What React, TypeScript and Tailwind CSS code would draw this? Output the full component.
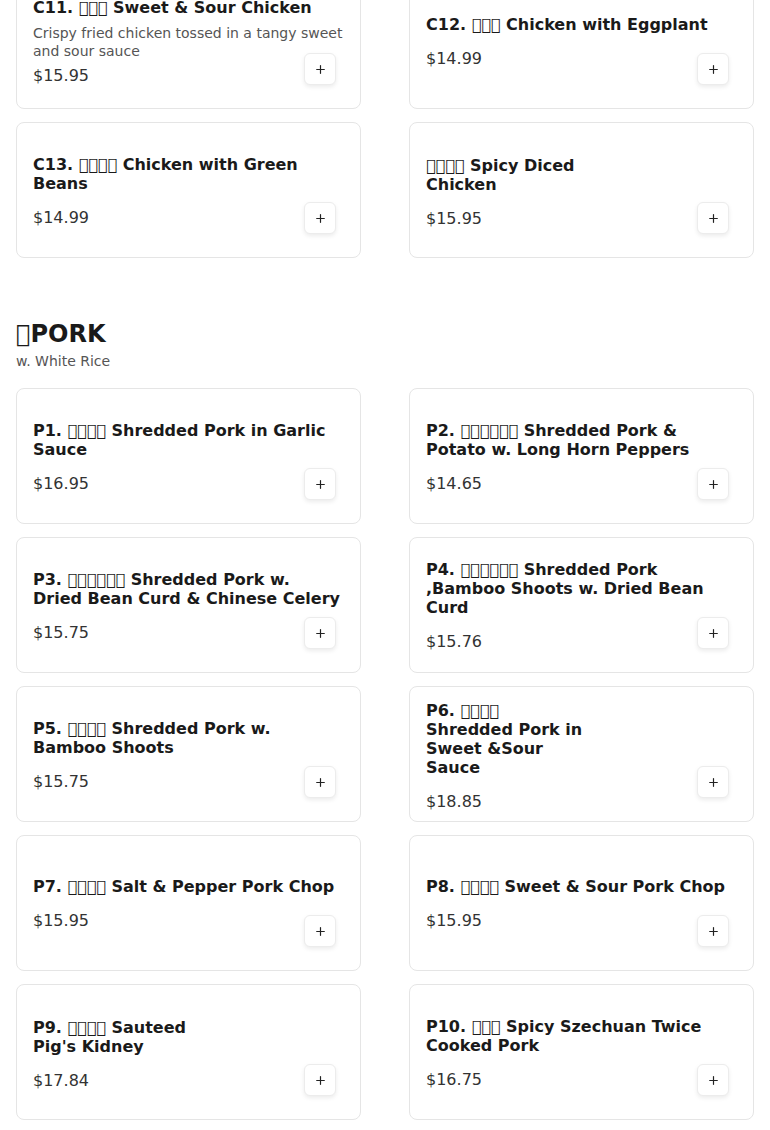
import { Plus } from 'lucide-react';

type MenuItem = {
  name: string;
  price: string;
  description?: string;
  image?: boolean;
};

// glyphs the reference font lacks render as empty boxes
const T = (n: number) => '\uE000'.repeat(n);

const chicken: MenuItem[] = [
  { name: `C11. ${T(3)} Sweet & Sour Chicken`, price: '$15.95', description: 'Crispy fried chicken tossed in a tangy sweet and sour sauce' },
  { name: `C12. ${T(3)} Chicken with Eggplant`, price: '$14.99' },
  { name: `C13. ${T(4)} Chicken with Green Beans`, price: '$14.99' },
  { name: `${T(4)} Spicy Diced Chicken`, price: '$15.95', image: true },
];

const pork: MenuItem[] = [
  { name: `P1. ${T(4)} Shredded Pork in Garlic Sauce`, price: '$16.95' },
  { name: `P2. ${T(6)} Shredded Pork & Potato w. Long Horn Peppers`, price: '$14.65' },
  { name: `P3. ${T(6)} Shredded Pork w. Dried Bean Curd & Chinese Celery`, price: '$15.75' },
  { name: `P4. ${T(6)} Shredded Pork ,Bamboo Shoots w. Dried Bean Curd`, price: '$15.76' },
  { name: `P5. ${T(4)} Shredded Pork w. Bamboo Shoots`, price: '$15.75' },
  { name: `P6. ${T(4)} Shredded Pork in Sweet &Sour Sauce`, price: '$18.85', image: true },
  { name: `P7. ${T(4)} Salt & Pepper Pork Chop`, price: '$15.95' },
  { name: `P8. ${T(4)} Sweet & Sour Pork Chop`, price: '$15.95' },
  { name: `P9. ${T(4)} Sauteed Pig's Kidney`, price: '$17.84', image: true },
  { name: `P10. ${T(3)} Spicy Szechuan Twice Cooked Pork`, price: '$16.75' },
];

const ItemCard = ({ item }: { item: MenuItem }) => (
  <div
    className={`relative flex h-[136px] gap-4 rounded-lg border border-[#e5e5e5] bg-white px-4 pb-4 ${item.image ? 'pt-[22px]' : 'pt-5'}`}
  >
    <div className="flex min-w-0 flex-1 flex-col justify-center">
      <h3 className="text-base font-bold leading-[19px] text-[#1a1a1a]">{item.name}</h3>
      {item.description && (
        <p className="mt-2 text-sm leading-[17.5px] text-[#555]">{item.description}</p>
      )}
      <p className={`${item.description ? 'mt-1' : 'mt-[13px]'} text-base leading-6 text-[#333]`}>{item.price}</p>
    </div>
    {item.image && <div className="w-[135px] shrink-0" />}
    <button
      type="button"
      className="absolute bottom-[23px] right-6 flex h-8 w-8 items-center justify-center rounded-md border border-[#ececec] bg-white text-[#222] shadow-[0_2px_4px_rgba(0,0,0,0.08)]"
    >
      <Plus size={13} strokeWidth={2.2} />
    </button>
  </div>
);

export default function App() {
  return (
    <div className="min-h-[1130px] bg-white font-['DejaVu_Sans',sans-serif]">
      <div className="-mt-[27px] px-4 pb-8">
        <div className="grid grid-cols-2 gap-x-12 gap-y-[13px]">
          {chicken.map((item) => <ItemCard key={item.name} item={item} />)}
        </div>

        <section className="mt-[62px]">
          <h2 className="text-2xl font-bold leading-[29px] text-[#1a1a1a]">{T(1)}PORK</h2>
          <p className="mt-0.5 text-sm leading-[21px] text-[#555]">w. White Rice</p>
          <div className="mt-4 grid grid-cols-2 gap-x-12 gap-y-[13px]">
            {pork.map((item) => <ItemCard key={item.name} item={item} />)}
          </div>
        </section>
      </div>
    </div>
  );
}
